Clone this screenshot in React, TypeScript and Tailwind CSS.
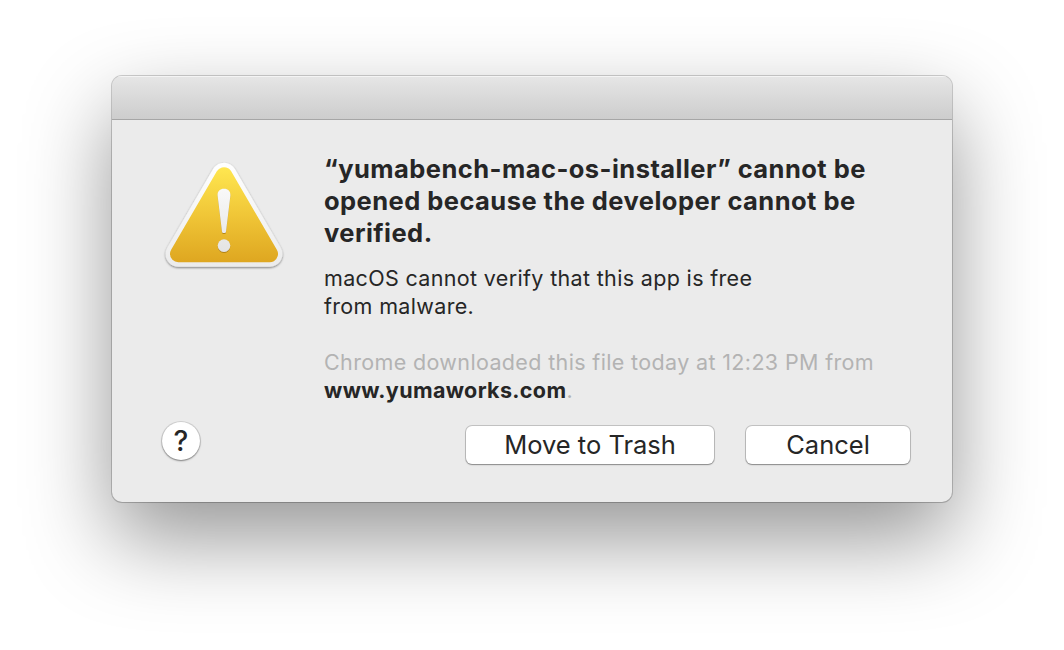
import React from "react";

function WarningIcon() {
  return (
    <svg width="128" height="122" viewBox="160 154 128 122" className="block">
      <defs>
        <linearGradient id="amber" gradientUnits="userSpaceOnUse" x1="0" y1="167" x2="0" y2="263">
          <stop offset="0" stopColor="#ffe750" />
          <stop offset="0.5" stopColor="#f0c637" />
          <stop offset="1" stopColor="#dea620" />
        </linearGradient>
        <linearGradient id="rim" gradientUnits="userSpaceOnUse" x1="0" y1="162" x2="0" y2="268">
          <stop offset="0" stopColor="#ffffff" />
          <stop offset="1" stopColor="#ebebeb" />
        </linearGradient>
        <linearGradient id="mark" gradientUnits="userSpaceOnUse" x1="0" y1="188" x2="0" y2="252">
          <stop offset="0" stopColor="#f9f9f9" />
          <stop offset="1" stopColor="#e4e4e4" />
        </linearGradient>
        <filter id="drop" x="-20%" y="-20%" width="140%" height="140%">
          <feDropShadow dx="0" dy="1" stdDeviation="1.1" floodColor="#000" floodOpacity="0.5" />
        </filter>
        <filter id="markDrop" x="-50%" y="-20%" width="200%" height="140%">
          <feDropShadow dx="0" dy="0.8" stdDeviation="0.6" floodColor="#7a5200" floodOpacity="0.6" />
        </filter>
      </defs>
      <path d="M224 175.5 L269.7 254 H178.3 Z" fill="url(#rim)" stroke="url(#rim)" strokeWidth="25.4" strokeLinejoin="round" filter="url(#drop)" />
      <path d="M224 175.5 L269.7 254 H178.3 Z" fill="url(#amber)" stroke="url(#amber)" strokeWidth="16.6" strokeLinejoin="round" />
      <g fill="url(#mark)" filter="url(#markDrop)">
        <path d="M217.6 195.5 C217.4 191 220 188.7 224 188.7 C228 188.7 230.6 191 230.4 195.5 L226 231.5 C225.8 233.6 222.2 233.6 222 231.5 Z" />
        <circle cx="224" cy="245.6" r="6.3" />
      </g>
    </svg>
  );
}

export default function App() {
  return (
    <div className="flex h-[650px] w-[1064px] items-start justify-center overflow-hidden bg-white pt-[76px] font-['Inter',sans-serif] text-[#262626]">
      <div className="flex h-[426px] w-[840px] flex-col overflow-hidden rounded-[10px] bg-[#ebebeb] shadow-[0_0_0_1px_rgba(0,0,0,0.18),0_1px_1px_rgba(0,0,0,0.06),0_36px_86px_rgba(0,0,0,0.42)]">
        <header className="h-11 shrink-0 border-b border-[#a6a6a6] bg-linear-to-b from-[#e6e6e6] to-[#cdcdcd] shadow-[inset_0_1px_0_#f4f4f4]" />
        <div className="flex flex-1 pl-12">
          <div className="w-[164px] shrink-0 pt-[34px]">
            <WarningIcon />
          </div>
          <div className="pt-[33px] whitespace-nowrap">
            <h1 className="text-[25.5px] leading-8 font-bold tracking-[0.45px]">
              <span className="block">“yumabench-mac-os-installer” cannot be</span>
              <span className="block">opened because the developer cannot be</span>
              <span className="block">verified.</span>
            </h1>
            <p className="mt-[15px] text-[21.5px] leading-7 tracking-[0.34px]">
              <span className="block">macOS cannot verify that this app is free</span>
              <span className="block">from malware.</span>
            </p>
            <p className="mt-7 text-[21.5px] leading-7 tracking-[0.36px] text-[#b3b3b3]">
              <span className="block">Chrome downloaded this file today at 12:23 PM from</span>
              <span className="block">
                <strong className="font-bold text-[#262626]">www.yumaworks.com</strong>.
              </span>
            </p>
          </div>
        </div>
        <footer className="flex h-[81px] shrink-0 items-start pr-[42px] pl-[50px]">
          <button className="mt-px flex size-[38px] items-center justify-center rounded-full bg-white text-[28px] leading-none font-medium shadow-[0_0_0_1px_rgba(0,0,0,0.1),0_1px_2px_rgba(0,0,0,0.4)]">
            ?
          </button>
          <button className="mt-[5px] ml-auto h-[38px] w-[248px] rounded-[6px] bg-white text-[25.5px] leading-[38px] shadow-[0_0_0_1px_rgba(0,0,0,0.17),0_1px_1.5px_rgba(0,0,0,0.3)]">
            Move to Trash
          </button>
          <button className="mt-[5px] ml-8 h-[38px] w-[164px] rounded-[6px] bg-white text-[25.5px] leading-[38px] shadow-[0_0_0_1px_rgba(0,0,0,0.17),0_1px_1.5px_rgba(0,0,0,0.3)]">
            Cancel
          </button>
        </footer>
      </div>
    </div>
  );
}
